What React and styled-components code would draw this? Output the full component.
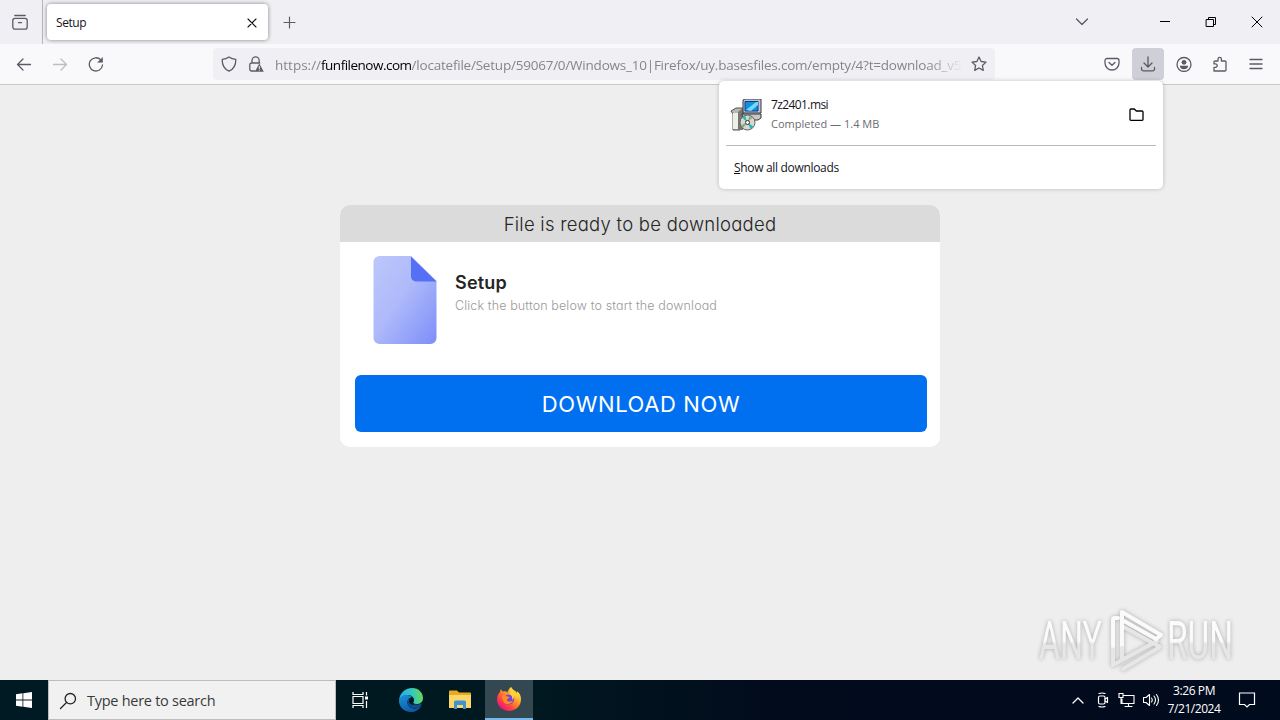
import React from "react";
import styled, { createGlobalStyle } from "styled-components";

const GlobalStyle = createGlobalStyle`
  * { box-sizing: border-box; }
  body {
    margin: 0;
    overflow: hidden;
    font-family: "Open Sans", "Noto Sans", sans-serif;
  }
  svg { display: block; flex: none; }
`;

const Screen = styled.div`
  display: flex;
  flex-direction: column;
  width: 1280px;
  height: 720px;
  background: #eeeeee;
`;

const Label = styled.span`
  font-size: ${(p) => p.$size}px;
  line-height: ${(p) => p.$line || 16}px;
  letter-spacing: ${(p) => p.$track || 0}px;
  color: ${(p) => p.$color || "#15141a"};
  white-space: pre;
`;

/* ---------- tab strip ---------- */

const TabStrip = styled.div`
  display: flex;
  height: 44px;
  background: #f0f0f4;
  color: #5b5b66;
`;

const ViewButton = styled.div`
  width: 43px;
  border-right: 1px solid #b4b4bb;
  padding: 14px 0 0 12px;
`;

const Tab = styled.div`
  display: flex;
  align-items: center;
  justify-content: space-between;
  width: 221px;
  height: 36px;
  margin: 4px 0 0 4px;
  padding: 1px 10px 0 9px;
  border-radius: 4px;
  background: #fff;
  box-shadow: 0 0 4px rgba(0, 0, 0, 0.45);
`;

const NewTab = styled.div`
  padding: 16px 0 0 15px;
  flex: 1;
`;

const WindowControls = styled.div`
  display: flex;
  align-items: center;
  height: 44px;
  gap: 34px;
  padding-right: 17px;
`;

const ListTabs = styled.div`
  margin-right: 70px;
`;

/* ---------- toolbar ---------- */

const Toolbar = styled.div`
  display: flex;
  align-items: center;
  height: 41px;
  background: #f9f9fb;
  border-bottom: 1px solid #c8c8cc;
  color: #5b5b66;
`;

const NavButtons = styled.div`
  display: flex;
  gap: 20px;
  width: 213px;
  padding-left: 16px;
`;

const UrlBar = styled.div`
  display: flex;
  align-items: center;
  width: 782px;
  height: 32px;
  padding: 0 8px;
  border-radius: 4px;
  background: #f0f0f4;
`;

const Lock = styled.div`
  margin-left: 11px;
`;

const Url = styled.div`
  display: flex;
  width: 688px;
  margin: 2px 8px 0 11px;
  mask-image: linear-gradient(to left, transparent, #000 36px);
`;

const ToolButtons = styled.div`
  display: flex;
  margin-left: 101px;
  gap: 4px;
`;

const ToolButton = styled.div`
  display: flex;
  align-items: center;
  justify-content: center;
  width: 32px;
  height: 32px;
  border-radius: 4px;
  background: ${(p) => (p.$open ? "#cfcfd8" : "transparent")};
`;

/* ---------- downloads popup ---------- */

const Popup = styled.div`
  position: absolute;
  left: 719px;
  top: 81px;
  width: 444px;
  height: 108px;
  padding: 0 7px;
  border-radius: 5px;
  background: #fff;
  box-shadow: 0 0 4px rgba(0, 0, 0, 0.22);
`;

const DownloadRow = styled.div`
  display: flex;
  align-items: center;
  height: 65px;
  padding: 3px 12px 0 4px;
  border-bottom: 1px solid #b9b9bd;
`;

const DownloadInfo = styled.div`
  display: flex;
  flex-direction: column;
  flex: 1;
  gap: 3px;
  margin: -1px 0 0 9px;
`;

const ShowAll = styled.div`
  display: flex;
  align-items: center;
  height: 43px;
  padding-left: 8px;

  u { text-underline-offset: 1px; }
`;

/* ---------- page ---------- */

const Page = styled.main`
  flex: 1;
  padding-top: 120px;
  font-family: Inter, "Open Sans", sans-serif;
  font-feature-settings: "cv11" 1;
`;

const Card = styled.section`
  width: 600px;
  height: 242px;
  margin: 0 auto;
  border-radius: 10px;
  overflow: hidden;
  background: #fff;
`;

const CardHeader = styled.h1`
  margin: 0;
  height: 37px;
  background: #dbdbdb;
  color: #252525;
  font-size: 18.5px;
  font-weight: 300;
  line-height: 38px;
  letter-spacing: 0.25px;
  text-align: center;
`;

const FileRow = styled.div`
  display: flex;
  gap: 18px;
  height: 133px;
  padding: 14px 0 0 33px;
`;

const FileName = styled.h2`
  margin: 15px 0 0;
  color: #252525;
  font-size: 18px;
  font-weight: 600;
  line-height: 24px;
  letter-spacing: 0.2px;
`;

const FileHint = styled.p`
  margin: 2px 0 0;
  color: #999;
  font-size: 12.5px;
  font-weight: 300;
  line-height: 18px;
  letter-spacing: 0.13px;
  white-space: nowrap;
`;

const DownloadButton = styled.button`
  display: block;
  width: 572px;
  height: 57px;
  margin-left: 15px;
  padding: 0;
  border: 0;
  border-radius: 6px;
  background: #0070f0;
  color: #fff;
  font: 400 22px/59px Inter, "Open Sans", sans-serif;
  letter-spacing: 0.6px;
`;

const Watermark = styled.div`
  position: absolute;
  left: 1030px;
  top: 600px;
  filter: drop-shadow(0 0 2px rgba(0, 0, 0, 0.28));
`;

/* ---------- taskbar ---------- */

const Taskbar = styled.footer`
  display: flex;
  height: 40px;
  background: linear-gradient(to right, #001a23, #001820 42%, #020b1c 60%, #010b1e);
  color: #fff;
`;

const TaskButton = styled.div`
  display: flex;
  align-items: center;
  justify-content: center;
  width: ${(p) => p.$width}px;
  background: ${(p) => (p.$active ? "#334850" : "transparent")};
  border-bottom: ${(p) => (p.$active ? "2px solid #76b9ed" : "0")};
`;

const SearchBox = styled.div`
  display: flex;
  align-items: center;
  width: 288px;
  gap: 10px;
  padding: 1px 0 0 10px;
  border: 1px solid #bdbdbd;
  background: #f1f1f1;
`;

const Tray = styled.div`
  display: flex;
  align-items: center;
  gap: 8px;
  margin-left: auto;
  padding-right: 24px;
`;

const Clock = styled.div`
  display: flex;
  flex-direction: column;
  align-items: center;
  width: 58px;
  margin: 0 7px 0 -3px;
`;

function Icon({ size = 16, width, height, children, ...rest }) {
  const w = width || size;
  const h = height || size;
  return (
    <svg
      width={w}
      height={h}
      viewBox={`0 0 ${w} ${h}`}
      fill="none"
      stroke="currentColor"
      strokeWidth="1.3"
      strokeLinecap="round"
      strokeLinejoin="round"
      {...rest}
    >
      {children}
    </svg>
  );
}

function Tabs() {
  return (
    <TabStrip>
      <ViewButton>
        <Icon>
          <rect x="0.8" y="4.3" width="14.4" height="10.9" rx="2.2" />
          <path d="M2.800 1.500h10.400M6.500 8.700h3" />
        </Icon>
      </ViewButton>
      <Tab>
        <Label $size={12} $track={-0.45}>Setup</Label>
        <Icon size={12} stroke="#15141a" strokeWidth="1.1">
          <path d="M2 2l8 8M10 2l-8 8" />
        </Icon>
      </Tab>
      <NewTab>
        <Icon size={13} strokeWidth="1.2">
          <path d="M6.500 1v11M1 6.500h11" />
        </Icon>
      </NewTab>
      <ListTabs>
        <Icon width={14} height={44}>
          <path d="M1.500 19l5.500 5.500 5.500-5.500" />
        </Icon>
      </ListTabs>
      <WindowControls>
        <Icon size={12} stroke="#000" strokeWidth="1" strokeLinecap="butt">
          <path d="M1 5.500h10" />
        </Icon>
        <Icon size={12} stroke="#000" strokeWidth="1" strokeLinejoin="miter">
          <path d="M1.500 3.500h7v7h-7zM3.500 3.500v-2h7v7h-2" />
        </Icon>
        <Icon size={12} stroke="#000" strokeWidth="1">
          <path d="M1 1l10 10M11 1L1 11" />
        </Icon>
      </WindowControls>
    </TabStrip>
  );
}

function NavBar() {
  return (
    <Toolbar>
      <NavButtons>
        <Icon>
          <path d="M14.500 8.500H1.500M7 3L1.500 8.500 7 14" />
        </Icon>
        <Icon stroke="#bdbdc3">
          <path d="M1.500 8.500h13M9 3l5.500 5.500L9 14" />
        </Icon>
        <Icon>
          <path d="M14.500 9A6.600 6.600 0 1 1 12.800 3.900" />
          <path d="M14.500 1.800v4.500H10z" fill="currentColor" strokeWidth="0.6" />
        </Icon>
      </NavButtons>
      <UrlBar>
        <Icon>
          <path d="M8 .9C6 2.500 3.800 3.200 1.200 3.400c-.1 5.400 1.300 9.300 6.800 11.700 5.500-2.400 6.900-6.300 6.800-11.700C12.200 3.200 10 2.500 8 .9z" />
        </Icon>
        <Lock>
          <Icon>
            <path d="M4 7V4.500a3.600 3.600 0 0 1 7.200 0V7M7 15H3.500A1.700 1.700 0 0 1 1.800 13.300V8.700A1.700 1.700 0 0 1 3.500 7h8.200" />
            <path d="M11.300 7.500l4.500 8.200H6.900z" fill="currentColor" stroke="none" />
            <path d="M11.300 10.300v2.600M11.300 14.200v.1" stroke="#f0f0f4" strokeWidth="1" />
          </Icon>
        </Lock>
        <Url>
          <Label $size={13.5} $line={20} $color="#85858c">https://</Label>
          <Label $size={13.5} $line={20} $color="#000" $track={-0.5}>funfilenow.com</Label>
          <Label $size={13.5} $line={20} $color="#85858c" $track={-0.22}>
            /locatefile/Setup/59067/0/Windows_10|Firefox/uy.basesfiles.com/empty/4?t=download_v5
          </Label>
        </Url>
        <Icon>
          <path d="M8 1l2.100 4.500 4.900.6-3.600 3.400.9 4.900L8 12l-4.300 2.400.9-4.900L1 6.100l4.900-.6z" />
        </Icon>
      </UrlBar>
      <ToolButtons>
        <ToolButton>
          <Icon>
            <path d="M3 2.500h10a2 2 0 0 1 2 2V7A7 7 0 0 1 1 7V4.500a2 2 0 0 1 2-2z" />
            <path d="M5 6.500L8 9.300l3-2.800" />
          </Icon>
        </ToolButton>
        <ToolButton $open>
          <Icon>
            <path d="M8 .8v10M4 7l4 4 4-4M1.500 11.500V13A1.800 1.800 0 0 0 3.300 14.800h9.400a1.800 1.800 0 0 0 1.800-1.800v-1.500" />
          </Icon>
        </ToolButton>
        <ToolButton>
          <Icon>
            <circle cx="8" cy="8.500" r="7" />
            <circle cx="8" cy="6.300" r="2.400" fill="currentColor" stroke="none" />
            <path d="M3.800 9.800h8.400c0 2-1.800 3.500-4.200 3.500s-4.200-1.500-4.200-3.500z" fill="currentColor" stroke="none" />
          </Icon>
        </ToolButton>
        <ToolButton>
          <Icon>
            <path d="M2 15V11.300h1.500a1.700 1.700 0 0 0 0-3.400H2V6a1 1 0 0 1 1-1h3V3a1.700 1.700 0 0 1 3.400 0v2H13a1 1 0 0 1 1 1v8a1 1 0 0 1-1 1z" />
          </Icon>
        </ToolButton>
        <ToolButton>
          <Icon>
            <path d="M2 3.500h12M2 8h12M2 12.500h12" />
          </Icon>
        </ToolButton>
      </ToolButtons>
    </Toolbar>
  );
}

function MsiIcon() {
  return (
    <svg width="32" height="32" viewBox="0 0 32 32">
      <path d="M1 12l5-3h8v5l-4 2v15H3V15z" fill="#b8b8b0" stroke="#55554e" />
      <path d="M3 14h5v16H3z" fill="#efefe9" />
      <path d="M8 13l5-4v22H8z" fill="#77776f" />
      <path d="M12 15h19v4l-3 2H13z" fill="#c9c9c4" stroke="#333" />
      <path d="M13 1l2-1h16v14H13z" fill="#c4c4cb" stroke="#35354a" />
      <path d="M15 2.500h13v9.500H15z" fill="#118fe0" stroke="#073c91" />
      <path d="M16 11L26 3h2v3l-7 6z" fill="#75d8f5" />
      <circle cx="17.500" cy="23.500" r="7.500" fill="#d8d8d0" stroke="#606060" />
      <path d="M17.500 23.500L12 18.500l3-2zM17.500 23.500l6 4-3 2.500z" fill="#27b7b2" />
      <path d="M17.500 23.500l2-7 3 2zM17.500 23.500L11 26l2 3z" fill="#8cab83" />
      <circle cx="17.500" cy="23.500" r="2" fill="#fff" stroke="#333" />
    </svg>
  );
}

function Downloads() {
  return (
    <Popup>
      <DownloadRow>
        <MsiIcon />
        <DownloadInfo>
          <Label $size={12} $track={-0.6}>7z2401.msi</Label>
          <Label $size={11} $color="#6c6c72">Completed — 1.4 MB</Label>
        </DownloadInfo>
        <Icon stroke="#000">
          <path d="M2 12.500V3a1 1 0 0 1 1-1h3.300l2 2h5.700a1 1 0 0 1 1 1v7.500a.8.8 0 0 1-.8.8H2.800a.8.8 0 0 1-.8-.8z" />
        </Icon>
      </DownloadRow>
      <ShowAll>
        <Label $size={12} $track={-0.32}><u>S</u>how all downloads</Label>
      </ShowAll>
    </Popup>
  );
}

function FileIcon() {
  return (
    <svg width="64" height="88" viewBox="0 0 64 88">
      <defs>
        <linearGradient id="sheet" x1="0" y1="0" x2="1" y2="1">
          <stop offset="0" stopColor="#bdc7fc" />
          <stop offset="0.45" stopColor="#aebafa" />
          <stop offset="1" stopColor="#7d8df8" />
        </linearGradient>
      </defs>
      <path d="M6.500 0H38l25.500 25v57a6 6 0 0 1-6 6h-51a6 6 0 0 1-6-6V6a6 6 0 0 1 6-6z" fill="url(#sheet)" />
      <path d="M38 0.500l25.500 25H43a5 5 0 0 1-5-5z" fill="#5570f5" />
    </svg>
  );
}

function AnyRun() {
  const text = {
    fontFamily: "Roboto, sans-serif",
    fontSize: 53,
    fontWeight: 400,
    lengthAdjust: "spacingAndGlyphs",
    fill: "url(#mark)",
  };
  return (
    <Watermark>
      <svg width="220" height="78" viewBox="0 -4 220 78">
        <defs>
          <linearGradient id="mark" x1="0" y1="0" x2="0" y2="1">
            <stop offset="0.5" stopColor="#fbfbfb" />
            <stop offset="0.55" stopColor="#e6e6e6" />
          </linearGradient>
        </defs>
        <text x="9" y="55" textLength="63" {...text}>ANY</text>
        <text x="137" y="55" textLength="66" {...text}>RUN</text>
        <g fill="none" strokeWidth="4" strokeLinejoin="round" strokeLinecap="round">
          <path d="M92 8l39 36L92 63" stroke="none" />
          <path d="M83 33v28l9-5 35-19" stroke="#e6e6e6" />
          <path d="M93 65l37-22-38-21" stroke="#e6e6e6" />
          <path d="M88 14h-3a2 2 0 0 0-2 2v26" stroke="#fafafa" />
          <path d="M92 44V8l39 23-5 4-32-18" stroke="#fafafa" />
          <path d="M92 44v10" stroke="#e6e6e6" />
        </g>
      </svg>
    </Watermark>
  );
}

function EdgeIcon() {
  return (
    <svg width="26" height="26" viewBox="0 0 26 26">
      <defs>
        <linearGradient id="edgeTop" x1="0" y1="0.5" x2="1" y2="0.4">
          <stop offset="0" stopColor="#27a9e8" />
          <stop offset="0.5" stopColor="#2fc4c9" />
          <stop offset="1" stopColor="#66dc57" />
        </linearGradient>
        <linearGradient id="edgeBody" x1="0" y1="0" x2="0.6" y2="1">
          <stop offset="0" stopColor="#1c92dc" />
          <stop offset="1" stopColor="#0c59a4" />
        </linearGradient>
      </defs>
      <path d="M1 13C2 5 8 1 14 1c7 0 11 5 11 10 0 4-3 6-6.500 6-3 0-4-1.200-3-2.500C17 11 14 8 10 8c-5 0-8 3-9 5z" fill="url(#edgeTop)" />
      <path d="M1 13c1-3 4-5 8-5 2.500 0 4.500 1 5.500 2.500C11 10 9 13 9.500 16c.6 4 5 6.500 9 5.500 2-.5 3-1.200 4.500-2C21 23 17 25 13 25 6 25 .5 19.500 1 13z" fill="url(#edgeBody)" />
      <path d="M9.500 16c-.5-3 1.500-5.500 5-5.500 1.500 1.500 1.500 3 1 4-1 1.500 0 3 3 3 2 0 4-.5 5-1.500.3 1.500-.5 3.500-2 4.500-5 2.500-11 .5-12-4.500z" fill="#124d87" />
      <path d="M11 14.500c0-2 1.500-4 3.500-4 1.500 1.500 1.500 3 1 4-1 1.500 0 2.500 1 3-3 1-5.500-1-5.500-3z" fill="#001922" />
    </svg>
  );
}

function FolderIcon() {
  return (
    <svg width="22" height="20" viewBox="0 0 22 20">
      <path d="M0 1.500A1 1 0 0 1 1 .500h7l2 2h11a1 1 0 0 1 1 1V18H0z" fill="#e9a922" />
      <path d="M0 5h22v13H0z" fill="#fcd667" />
      <path d="M5 19v-7a1.500 1.500 0 0 1 1.500-1.500h9A1.500 1.500 0 0 1 17 12v7h-3v-4H8v4z" fill="#3f93d2" />
    </svg>
  );
}

function FirefoxIcon() {
  return (
    <svg width="24" height="24" viewBox="0 0 24 24">
      <defs>
        <linearGradient id="fox" x1="0.85" y1="0.1" x2="0.15" y2="0.9">
          <stop offset="0" stopColor="#fff04a" />
          <stop offset="0.4" stopColor="#ff9526" />
          <stop offset="0.75" stopColor="#ff3b47" />
          <stop offset="1" stopColor="#e3128b" />
        </linearGradient>
      </defs>
      <path d="M14 0c1 1 2 3 4 4 1-.1 1 1 1.500 2 .5-.3.500-1 .2-2C23 6 24 9 24 12.500 24 19 18.500 24 12 24S0 19 0 12.500C0 9 1.500 6.500 3 5c0-1 .3-2 1-3 .4 1 1 2 2 2.500 2-.5 3.500 0 4.500 1C11 3 12.500 1.500 14 0z" fill="url(#fox)" />
      <circle cx="12" cy="12.500" r="5" fill="#7544d8" />
      <path d="M5 8c2 0 3 .4 4.500 1.200 1.500.6 3 .3 3 1.300s-2.500 1-2.500 2.500c.5 2 4 2 6 .5-1 4-7.500 5-9.500 1C5.400 12.500 5 10 5 8z" fill="#ff8b24" />
      <path d="M14 0c1 4 6 6 6 12-1-2-2-3-3-3.500.5 2-1 4-2 4 1-3-1-4.500-2.500-5C14 5 13 3 14 0z" fill="#ffd339" />
    </svg>
  );
}

function BottomBar() {
  return (
    <Taskbar>
      <TaskButton $width={48}>
        <svg width="16" height="16" viewBox="0 0 16 16" fill="#fff">
          <path d="M0 2.200L6.500 1.300v6.200H0zM7.300 1.200L16 0v7.500H7.300zM0 8.400h6.500v6.300L0 13.800zM7.300 8.400H16V16l-8.700-1.200z" />
        </svg>
      </TaskButton>
      <SearchBox>
        <Icon size={18} stroke="#222" strokeWidth="1.300">
          <circle cx="11.300" cy="6.700" r="5.200" />
          <path d="M7.500 10.500L1.500 16.500" />
        </Icon>
        <Label $size={14.5} $line={20} $color="#3a3a3a" $track={-0.27}>Type here to search</Label>
      </SearchBox>
      <TaskButton $width={48}>
        <Icon width={17} height={16} strokeWidth="1.200" strokeLinecap="butt" strokeLinejoin="miter">
          <path d="M1 0v2.500h10V0M1 16v-2.500h10V16M1 4.500h10v7H1zM14.500 0v3.500M14.500 9v7" />
          <path d="M13 4.500h3v3h-3z" fill="#fff" stroke="none" />
        </Icon>
      </TaskButton>
      <TaskButton $width={53}><EdgeIcon /></TaskButton>
      <TaskButton $width={46}><FolderIcon /></TaskButton>
      <TaskButton $width={2} />
      <TaskButton $width={48} $active><FirefoxIcon /></TaskButton>
      <Tray>
        <Icon width={16} height={12} strokeWidth="1.300">
          <path d="M1 9l5-5 5 5" />
        </Icon>
        <Icon width={14} height={16} strokeWidth="1.200">
          <rect x="2.500" y="4" width="6.500" height="8" rx="1.500" />
          <path d="M9 7l2.500-1.500v5L9 9M3 1.500q3-1 6 0M3 14.500q3 1 6 0" />
        </Icon>
        <Icon width={17} height={16} strokeWidth="1.100" strokeLinejoin="miter">
          <path d="M6 3.500h10v8H4V7M7 14.500h7M10.500 11.500v3M1 1.500h4v4H1zM3 5.500v6" />
        </Icon>
        <Icon width={17} height={16} strokeWidth="1.100">
          <path d="M.5 5.500H3L6.500 2.500v11l-3.500-3H.5zM8.500 6q1.500 2 0 4M11 4q3 4 0 8M13.500 2.500q4 5.500 0 11" />
        </Icon>
        <Clock>
          <Label $size={12} $line={18} $track={-0.4} $color="#fff">3:26 PM</Label>
          <Label $size={12} $line={18} $track={-0.45} $color="#fff">7/21/2024</Label>
        </Clock>
        <Icon width={18} height={18} strokeWidth="1.200" strokeLinejoin="miter">
          <path d="M1.500 2h15v11.500h-5L9 16l-2.500-2.500h-5z" />
        </Icon>
      </Tray>
    </Taskbar>
  );
}

export default function App() {
  return (
    <Screen>
      <GlobalStyle />
      <Tabs />
      <NavBar />
      <Page>
        <Card>
          <CardHeader>File is ready to be downloaded</CardHeader>
          <FileRow>
            <FileIcon />
            <div>
              <FileName>Setup</FileName>
              <FileHint>Click the button below to start the download</FileHint>
            </div>
          </FileRow>
          <DownloadButton>DOWNLOAD NOW</DownloadButton>
        </Card>
      </Page>
      <BottomBar />
      <Downloads />
      <AnyRun />
    </Screen>
  );
}
